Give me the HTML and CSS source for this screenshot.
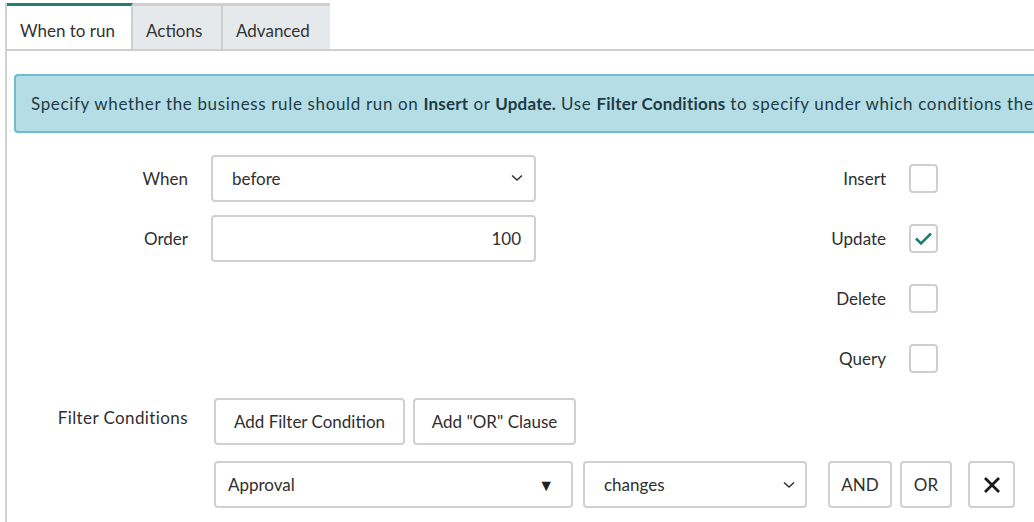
FILE: index.html
```html
<!DOCTYPE html>
<html>
<head>
<meta charset="utf-8">
<link rel="stylesheet" href="styles.css">
</head>
<body>
<div class="panel">
  <div class="tabs">
    <div class="tab active">When to run</div>
    <div class="tab">Actions</div>
    <div class="tab last">Advanced</div>
  </div>
  <div class="content">
    <div class="info">Specify whether the business rule should run on <b>Insert</b> or <b>Update.</b> Use <b>Filter Conditions</b> to specify under which conditions the business rule should run.</div>
    <div class="form">
      <div class="col-left">
        <div class="row">
          <label class="lbl">When</label>
          <div class="field select">
            <span>before</span>
            <svg class="chev" width="12" height="8" viewBox="0 0 12 8"><path d="M1 1.5 L6 6 L11 1.5" fill="none" stroke="#333" stroke-width="1.6"/></svg>
          </div>
        </div>
        <div class="row">
          <label class="lbl">Order</label>
          <div class="field num">100</div>
        </div>
      </div>
      <div class="col-right">
        <div class="crow"><span class="clbl">Insert</span><span class="cb"></span></div>
        <div class="crow"><span class="clbl">Update</span><span class="cb"><svg width="19" height="15" viewBox="0 0 19 15"><path d="M2 7.5 L7 12.5 L17 2.5" fill="none" stroke="#1f7f6f" stroke-width="2.6"/></svg></span></div>
        <div class="crow"><span class="clbl">Delete</span><span class="cb"></span></div>
        <div class="crow"><span class="clbl">Query</span><span class="cb"></span></div>
      </div>
    </div>
    <div class="filter">
      <div class="flbl">Filter Conditions</div>
      <div class="fbody">
        <div class="frow">
          <div class="btn w-add">Add Filter Condition</div>
          <div class="btn w-or">Add "OR" Clause</div>
        </div>
        <div class="frow frow2">
          <div class="fsel w-appr"><span>Approval</span><span class="tri">▼</span></div>
          <div class="fsel w-chg"><span>changes</span><svg class="chev" width="12" height="8" viewBox="0 0 12 8"><path d="M1 1.5 L6 6 L11 1.5" fill="none" stroke="#333" stroke-width="1.6"/></svg></div>
          <div class="btn w-and">AND</div>
          <div class="btn w-orb">OR</div>
          <div class="btn w-x"><svg width="18" height="18" viewBox="0 0 18 18"><path d="M2 2 L16 16 M16 2 L2 16" stroke="#1a1a1a" stroke-width="2.8"/></svg></div>
        </div>
      </div>
    </div>
  </div>
</div>
</body>
</html>
```
FILE: styles.css
```css
html, body {
  margin: 0;
  padding: 0;
  overflow: hidden;
  background: #fff;
}
body {
  width: 1034px;
  height: 522px;
  font-family: "Lato", "Noto Sans", sans-serif;
  font-size: 17px;
  color: #2f2f2f;
}
.panel {
  margin: 3px 0 0 5px;
  border-left: 2px solid #d0d0d0;
  height: 530px;
}
.tabs {
  display: flex;
  height: 46px;
  border-bottom: 2px solid #cfcfcf;
  width: 1100px;
}
.tab {
  box-sizing: border-box;
  height: 46px;
  padding: 5px 13px 0;
  display: flex;
  align-items: center;
  border-top: 3px solid #cfcfcf;
  border-right: 2px solid #cfcfcf;
  background: #e6e9ec;
  color: #333;
}
.tab.active {
  background: #fff;
  border-top-color: #22806f;
  width: 126px;
}
.tab:nth-child(2) { width: 90px; }
.tab.last { width: 107px; border-right: none; }
.content {
  padding-left: 7px;
}
.info {
  margin-top: 23px;
  box-sizing: border-box;
  height: 59px;
  width: 1100px;
  background: #b4dde5;
  border: 2px solid #6dbdd0;
  border-radius: 4px;
  padding-left: 15px;
  display: flex;
  align-items: center;
  white-space: pre;
  letter-spacing: 0.65px;
  color: #1f3b45;
}
.info b {
  font-weight: 700;
  letter-spacing: 0.2px;
}
.form {
  display: flex;
  margin-top: 15px;
}
.col-left {
  width: 522px;
}
.row {
  height: 60px;
  display: flex;
  align-items: center;
}
.lbl {
  width: 174px;
  text-align: right;
  margin-right: 23px;
}
.field {
  box-sizing: border-box;
  width: 325px;
  height: 47px;
  border: 2px solid #d0d0d0;
  border-radius: 4px;
  display: flex;
  align-items: center;
}
.select {
  justify-content: space-between;
  padding: 0 11px 0 19px;
}
.num {
  justify-content: flex-end;
  padding-right: 13px;
}
.col-right {
  margin-left: 237px;
}
.crow {
  height: 60px;
  display: flex;
  align-items: center;
}
.clbl {
  width: 113px;
  text-align: right;
  margin-right: 23px;
}
.cb {
  box-sizing: border-box;
  width: 29px;
  height: 29px;
  border: 2px solid #cfcfcf;
  border-radius: 4px;
  display: flex;
  align-items: center;
  justify-content: center;
}
.filter {
  display: flex;
  margin-top: 10px;
}
.flbl {
  width: 174px;
  text-align: right;
  margin-right: 26px;
  padding-top: 9px;
  letter-spacing: 0.4px;
}
.fbody {
  display: flex;
  flex-direction: column;
  gap: 16px;
}
.frow {
  display: flex;
  gap: 8px;
}
.btn {
  box-sizing: border-box;
  height: 47px;
  border: 2px solid #d0d0d0;
  border-radius: 4px;
  display: flex;
  align-items: center;
  justify-content: center;
  color: #2f2f2f;
}
.w-add { width: 191px; }
.w-or { width: 163px; }
.fsel {
  box-sizing: border-box;
  height: 47px;
  border: 2px solid #d0d0d0;
  border-radius: 4px;
  display: flex;
  align-items: center;
  justify-content: space-between;
}
.w-appr { width: 359px; padding: 0 17px 0 12px; }
.tri { font-size: 16px; color: #222; }
.w-chg { width: 224px; margin-left: 2px; padding: 0 10px 0 19px; }
.w-and { width: 64px; margin-left: 13px; }
.w-orb { width: 52px; }
.w-x { width: 47px; margin-left: 8px; }
```
